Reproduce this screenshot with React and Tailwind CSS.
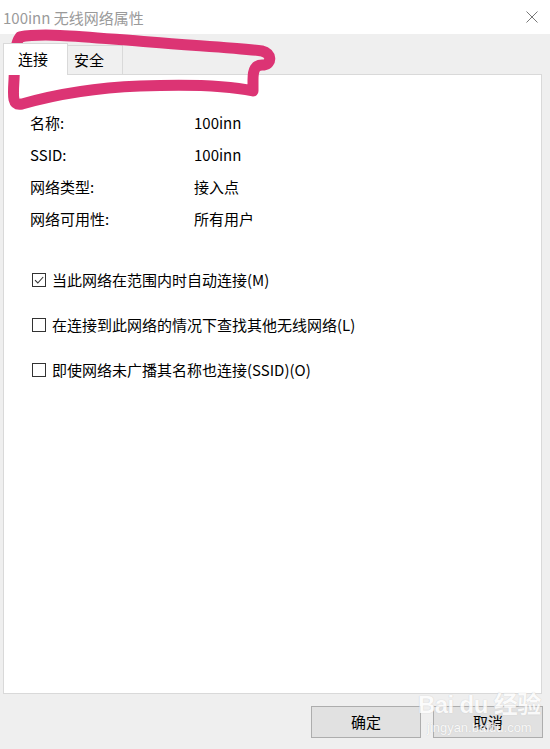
import React from "react";

const font = { fontFamily: '"Noto Sans CJK SC", "Noto Sans", sans-serif' };

function Check({ checked }) {
  return (
    <div className="w-[14px] h-[14px] border border-[#333] bg-white flex items-center justify-center shrink-0">
      {checked && (
        <svg width="12" height="12" viewBox="0 0 12 12">
          <path d="M2 6.2 L4.8 9 L10.2 3" fill="none" stroke="#333" strokeWidth="1.1" />
        </svg>
      )}
    </div>
  );
}

export default function App() {
  const rows = [
    ["名称:", "100inn"],
    ["SSID:", "100inn"],
    ["网络类型:", "接入点"],
    ["网络可用性:", "所有用户"],
  ];
  const checks = [
    [true, "当此网络在范围内时自动连接(M)"],
    [false, "在连接到此网络的情况下查找其他无线网络(L)"],
    [false, "即使网络未广播其名称也连接(SSID)(O)"],
  ];
  return (
    <div className="relative w-[550px] h-[749px] bg-[#efefef] flex flex-col overflow-hidden" style={font}>
      {/* title bar */}
      <div className="h-[34px] bg-white flex items-center justify-between pl-[3px] pr-[12px] shrink-0">
        <span className="text-[15px] text-[#9a9a9a] leading-none">100inn 无线网络属性</span>
        <svg width="12" height="12" viewBox="0 0 12 12">
          <path d="M0.5 0.5 L11.5 11.5 M11.5 0.5 L0.5 11.5" stroke="#777" strokeWidth="1" />
        </svg>
      </div>

      {/* tabs */}
      <div className="flex items-end pl-[3px] pt-[9px] h-[40px] shrink-0">
        <div className="relative z-10 h-[32px] w-[65px] bg-white border border-b-0 border-[#d9d9d9] flex items-center pl-[14px] text-[15px] text-black -mb-px">
          连接
        </div>
        <div className="h-[29px] w-[55px] bg-[#f0f0f0] border border-l-0 border-b-0 border-[#d9d9d9] flex items-center pl-[6px] text-[15px] text-black">
          安全
        </div>
      </div>

      {/* panel */}
      <div className="ml-[3px] w-[539px] h-[620px] bg-white border border-[#d9d9d9] shrink-0 pt-[38px] pl-[26px]">
        <div className="flex flex-col gap-[12px]">
          {rows.map(([k, v]) => (
            <div key={k} className="flex h-[20px] items-center text-[15px] text-black">
              <span className="w-[164px]">{k}</span>
              <span>{v}</span>
            </div>
          ))}
        </div>
        <div className="flex flex-col gap-[25px] mt-[41px] pl-[2px]">
          {checks.map(([c, t]) => (
            <div key={t} className="flex items-center gap-[6px] h-[20px] text-[15px] text-black">
              <Check checked={c} />
              <span>{t}</span>
            </div>
          ))}
        </div>
      </div>

      {/* buttons */}
      <div className="flex justify-end gap-[12px] pr-[7px] pt-[12px]">
        <button className="w-[110px] h-[32px] bg-[#e1e1e1] border border-[#adadad] text-[15px] text-black">确定</button>
        <button className="w-[110px] h-[32px] bg-[#e1e1e1] border border-[#adadad] text-[15px] text-black">取消</button>
      </div>

      {/* pink scribble */}
      <svg className="absolute left-0 top-0 pointer-events-none" width="290" height="120" viewBox="0 0 290 120">
        <path
          d="M20 37 C45 32 95 38 150 42 C200 46 240 48 262 51 C272 53 272 64 264 65 C255 64 253 70 253 80 L253 91 C230 86 190 84 140 86 C90 88 50 96 22 104 C12 106 13 96 14 80 C15 60 14 45 20 37"
          fill="none"
          stroke="#dc3474"
          strokeWidth="11"
          strokeLinecap="round"
          strokeLinejoin="round"
        />
      </svg>

      {/* watermark */}
      <div className="absolute left-[418px] top-[693px] pointer-events-none flex flex-col items-center text-white opacity-80 whitespace-nowrap">
        <span className="text-[24px] font-bold leading-none tracking-tight" style={{ fontFamily: '"Liberation Sans", "Noto Sans CJK SC", sans-serif', textShadow: "0 0 1px #bbb" }}>Bai du 经验</span>
        <span className="text-[13px] leading-none mt-[4px]" style={{ fontFamily: '"Liberation Sans", sans-serif', textShadow: "0 0 1px #bbb" }}>jingyan.baidu.com</span>
      </div>
    </div>
  );
}
